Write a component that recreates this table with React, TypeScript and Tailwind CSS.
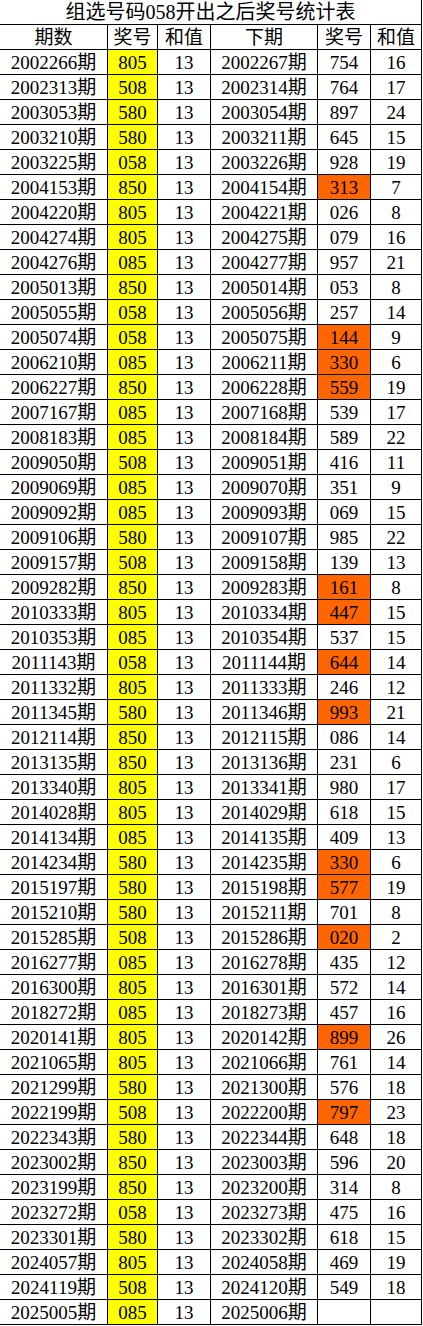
import React from 'react';

type Row = [string, string, string, string, string, string, boolean];

// 期数, 奖号, 和值, 下期, 下期奖号, 下期和值, 下期是否标橙
const rows: Row[] = [
  ['2002266', '805', '13', '2002267', '754', '16', false],
  ['2002313', '508', '13', '2002314', '764', '17', false],
  ['2003053', '580', '13', '2003054', '897', '24', false],
  ['2003210', '580', '13', '2003211', '645', '15', false],
  ['2003225', '058', '13', '2003226', '928', '19', false],
  ['2004153', '850', '13', '2004154', '313', '7', true],
  ['2004220', '805', '13', '2004221', '026', '8', false],
  ['2004274', '805', '13', '2004275', '079', '16', false],
  ['2004276', '085', '13', '2004277', '957', '21', false],
  ['2005013', '850', '13', '2005014', '053', '8', false],
  ['2005055', '058', '13', '2005056', '257', '14', false],
  ['2005074', '058', '13', '2005075', '144', '9', true],
  ['2006210', '085', '13', '2006211', '330', '6', true],
  ['2006227', '850', '13', '2006228', '559', '19', true],
  ['2007167', '085', '13', '2007168', '539', '17', false],
  ['2008183', '085', '13', '2008184', '589', '22', false],
  ['2009050', '508', '13', '2009051', '416', '11', false],
  ['2009069', '085', '13', '2009070', '351', '9', false],
  ['2009092', '085', '13', '2009093', '069', '15', false],
  ['2009106', '580', '13', '2009107', '985', '22', false],
  ['2009157', '508', '13', '2009158', '139', '13', false],
  ['2009282', '850', '13', '2009283', '161', '8', true],
  ['2010333', '805', '13', '2010334', '447', '15', true],
  ['2010353', '085', '13', '2010354', '537', '15', false],
  ['2011143', '058', '13', '2011144', '644', '14', true],
  ['2011332', '805', '13', '2011333', '246', '12', false],
  ['2011345', '580', '13', '2011346', '993', '21', true],
  ['2012114', '850', '13', '2012115', '086', '14', false],
  ['2013135', '850', '13', '2013136', '231', '6', false],
  ['2013340', '805', '13', '2013341', '980', '17', false],
  ['2014028', '805', '13', '2014029', '618', '15', false],
  ['2014134', '085', '13', '2014135', '409', '13', false],
  ['2014234', '580', '13', '2014235', '330', '6', true],
  ['2015197', '580', '13', '2015198', '577', '19', true],
  ['2015210', '580', '13', '2015211', '701', '8', false],
  ['2015285', '508', '13', '2015286', '020', '2', true],
  ['2016277', '085', '13', '2016278', '435', '12', false],
  ['2016300', '805', '13', '2016301', '572', '14', false],
  ['2018272', '085', '13', '2018273', '457', '16', false],
  ['2020141', '805', '13', '2020142', '899', '26', true],
  ['2021065', '805', '13', '2021066', '761', '14', false],
  ['2021299', '580', '13', '2021300', '576', '18', false],
  ['2022199', '508', '13', '2022200', '797', '23', true],
  ['2022343', '580', '13', '2022344', '648', '18', false],
  ['2023002', '850', '13', '2023003', '596', '20', false],
  ['2023199', '850', '13', '2023200', '314', '8', false],
  ['2023272', '058', '13', '2023273', '475', '16', false],
  ['2023301', '580', '13', '2023302', '618', '15', false],
  ['2024057', '805', '13', '2024058', '469', '19', false],
  ['2024119', '508', '13', '2024120', '549', '18', false],
  ['2025005', '085', '13', '2025006', '', '', false],
];

const cell = 'h-full flex items-center justify-center border-r border-black';

const App: React.FC = () => {
  return (
    <div className="w-[423px] bg-white text-black [font-family:'Liberation_Serif','Noto_Sans_CJK_SC',serif]">
      {/* 标题 */}
      <div className="w-[422px] h-[25px] flex items-center justify-center border-b border-r border-black text-[20px] leading-none">
        组选号码058开出之后奖号统计表
      </div>

      {/* 表头 */}
      <div className="flex h-[25px] border-b border-black text-[19px] leading-none w-[422px]">
        <div className={`${cell} w-[108px]`}>期数</div>
        <div className={`${cell} w-[50px]`}>奖号</div>
        <div className={`${cell} w-[53px]`}>和值</div>
        <div className={`${cell} w-[107px]`}>下期</div>
        <div className={`${cell} w-[53px]`}>奖号</div>
        <div className={`${cell} w-[51px]`}>和值</div>
      </div>

      {rows.map(([qi, num, sum, next, nextNum, nextSum, hot]) => (
        <div key={qi} className="flex h-[25px] border-b border-black text-[19px] leading-none w-[422px]">
          <div className={`${cell} w-[108px]`}>{qi}期</div>
          <div className={`${cell} w-[50px] bg-[#ffff00]`}>{num}</div>
          <div className={`${cell} w-[53px]`}>{sum}</div>
          <div className={`${cell} w-[107px]`}>{next}期</div>
          <div className={`${cell} w-[53px] ${hot ? 'bg-[#ff6600]' : ''}`}>{nextNum}</div>
          <div className={`${cell} w-[51px]`}>{nextSum}</div>
        </div>
      ))}
    </div>
  );
};

export default App;
